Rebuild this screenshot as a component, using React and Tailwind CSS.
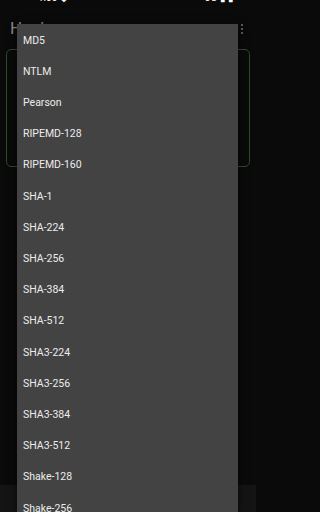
import React from 'react';

const algorithms = [
  'MD5',
  'NTLM',
  'Pearson',
  'RIPEMD-128',
  'RIPEMD-160',
  'SHA-1',
  'SHA-224',
  'SHA-256',
  'SHA-384',
  'SHA-512',
  'SHA3-224',
  'SHA3-256',
  'SHA3-384',
  'SHA3-512',
  'Shake-128',
  'Shake-256',
];

const App = () => {
  return (
    <div className="w-full h-[512px] bg-[#0a0a0a]">
      <div
        className="relative w-[256px] h-[512px] overflow-hidden bg-[#0a0a0a] flex flex-col"
        style={{ fontFamily: 'Roboto, "Noto Sans", sans-serif' }}
      >
        {/* status bar, mostly scrolled off the top */}
        <div className="h-[4px] flex justify-between pl-[38px] pr-[22px] text-[10px] leading-none text-white -mt-[7px]">
          <span>1:00 ◆</span>
          <span>5G ▮ ▮</span>
        </div>

        {/* toolbar */}
        <div className="h-[38px] flex items-center justify-between pl-[10px] pr-[13px] mt-[13px]">
          <span className="text-[17px] text-[#8a8a8a]">Hash</span>
          <span className="flex flex-col gap-[1.5px]">
            <span className="w-[2.5px] h-[2.5px] rounded-full bg-[#777]" />
            <span className="w-[2.5px] h-[2.5px] rounded-full bg-[#777]" />
            <span className="w-[2.5px] h-[2.5px] rounded-full bg-[#777]" />
          </span>
        </div>

        {/* algorithm card */}
        <div className="mx-[6px] mt-[1px] h-[118px] rounded-[5px] border border-[#2d4a2d]" />

        <div className="flex-1" />

        {/* bottom bar */}
        <div className="h-[27px] bg-[#141414]" />

        {/* dropdown menu */}
        <div className="absolute left-[17px] w-[221px] top-[24px] bottom-0 pt-[1px] bg-[#434343] shadow-[0_2px_8px_rgba(0,0,0,0.6)]">
          {algorithms.map((name) => (
            <div key={name} className="h-[31.2px] flex items-center pl-[6px] text-[10.5px] text-[#ececec]">
              {name}
            </div>
          ))}
        </div>
      </div>
    </div>
  );
};

export default App;
